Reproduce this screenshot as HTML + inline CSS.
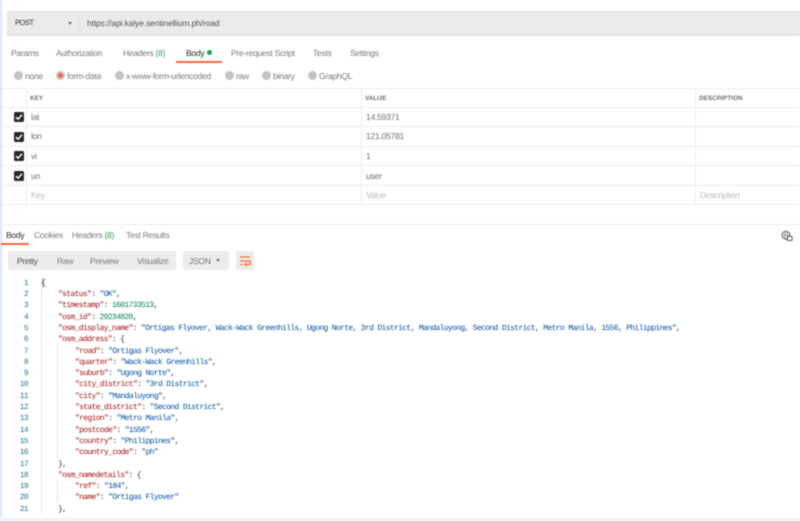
<!DOCTYPE html>
<html><head><meta charset="utf-8"><style>
html,body{margin:0;padding:0;background:#fff}
#r{position:relative;width:800px;height:521px;overflow:hidden;background:#fff;font-family:"Liberation Sans",sans-serif;filter:blur(.45px);text-rendering:geometricPrecision}
#r div,#r span.a{position:absolute;white-space:pre}
.t{font-size:8.6px;letter-spacing:-.3px;color:#7a7a7a;line-height:12px;height:12px}
.d{color:#303030}
.g{color:#2f9e5f}
.r{width:9px;height:9px;border-radius:50%;background:#c4c4c4}
.h{font-size:6.4px;font-weight:bold;color:#707070;line-height:10px}
.lh{background:#ececec}
.v{background:#ececec;width:1px}
.c{width:10px;height:10px;background:#282828;border-radius:1.5px}
.c svg{position:absolute;left:0;top:0}
.cell{font-size:8.6px;letter-spacing:-.3px;color:#707070;line-height:12px}
.ph{color:#b8b8b8}
.m{font-family:"Liberation Mono",monospace;font-size:8px;letter-spacing:-.653px;line-height:11px;color:#333}
.n{font-family:"Liberation Mono",monospace;font-size:8px;letter-spacing:-.653px;line-height:11px;color:#237893;text-align:right;width:20px;left:8px}
.k{color:#a31515}.s{color:#0451a5}.u{color:#098658}
</style></head><body><div id="r">
<div style="left:0;top:0;width:2px;height:521px;background:#d5e6fb"></div>
<div style="left:0;top:518px;width:800px;height:3px;background:#eef3fa"></div>

<div style="left:7px;top:11px;width:793px;height:25px;background:#ebebeb;border-top:1px solid #e0e0e0;border-bottom:1px solid #e0e0e0;box-sizing:border-box"></div>
<div style="left:7px;top:11px;width:1px;height:25px;background:#e0e0e0"></div>
<div style="left:79px;top:11px;width:1px;height:25px;background:#e0e0e0"></div>
<div class="t d" style="left:15px;top:17px;font-size:7.6px;letter-spacing:-.55px">POST</div>
<div style="left:68px;top:22px;width:0;height:0;border-left:2.5px solid transparent;border-right:2.5px solid transparent;border-top:3px solid #707070"></div>
<div class="t" style="left:87px;top:17px;color:#505050;font-size:8.4px;letter-spacing:-.08px">https://api.kalye.sentinellium.ph/road</div>

<div class="t" style="left:11px;top:47px">Params</div>
<div class="t" style="left:56px;top:47px">Authorization</div>
<div class="t" style="left:123px;top:47px">Headers <span class="g">(8)</span></div>
<div class="t d" style="left:186px;top:47px">Body</div>
<div style="left:207px;top:50px;width:5px;height:5px;border-radius:50%;background:#1f9d55"></div>
<div style="left:176px;top:61px;width:46px;height:2px;background:#f26b3a"></div>
<div class="t" style="left:231px;top:47px">Pre-request Script</div>
<div class="t" style="left:313px;top:47px">Tests</div>
<div class="t" style="left:350px;top:47px">Settings</div>

<div class="r" style="left:14px;top:71px"></div><div class="t" style="left:25px;top:70px">none</div>
<div class="r" style="left:56px;top:71px"></div><div style="left:58px;top:73px;width:5px;height:5px;border-radius:50%;background:#f26b3a"></div><div class="t" style="left:67px;top:70px">form-data</div>
<div class="r" style="left:115px;top:71px"></div><div class="t" style="left:126px;top:70px">x-www-form-urlencoded</div>
<div class="r" style="left:225px;top:71px"></div><div class="t" style="left:236px;top:70px">raw</div>
<div class="r" style="left:262px;top:71px"></div><div class="t" style="left:273px;top:70px">binary</div>
<div class="r" style="left:308px;top:71px"></div><div class="t" style="left:319px;top:70px">GraphQL</div>

<div class="lh" style="left:2px;top:88px;width:798px;height:1px"></div>
<div class="lh" style="left:2px;top:107px;width:798px;height:1px"></div>
<div class="lh" style="left:2px;top:126px;width:798px;height:1px"></div>
<div class="lh" style="left:2px;top:146px;width:798px;height:1px"></div>
<div class="lh" style="left:2px;top:165px;width:798px;height:1px"></div>
<div class="lh" style="left:2px;top:185px;width:798px;height:1px"></div>
<div class="lh" style="left:2px;top:204px;width:798px;height:1px"></div>
<div class="lh" style="left:0;top:224px;width:800px;height:1px"></div>
<div class="v" style="left:26px;top:88px;height:117px"></div>
<div class="v" style="left:361px;top:88px;height:117px"></div>
<div class="v" style="left:695px;top:88px;height:117px"></div>

<div class="h" style="left:30px;top:94px">KEY</div>
<div class="h" style="left:365px;top:94px">VALUE</div>
<div class="h" style="left:699px;top:94px">DESCRIPTION</div>

<div class="c" style="left:14px;top:112px"><svg width="10" height="10" viewBox="0 0 10 10"><path d="M2 5.2L4.1 7.2L8 2.8" fill="none" stroke="#fff" stroke-width="1.5"/></svg></div>
<div class="c" style="left:14px;top:132px"><svg width="10" height="10" viewBox="0 0 10 10"><path d="M2 5.2L4.1 7.2L8 2.8" fill="none" stroke="#fff" stroke-width="1.5"/></svg></div>
<div class="c" style="left:14px;top:151px"><svg width="10" height="10" viewBox="0 0 10 10"><path d="M2 5.2L4.1 7.2L8 2.8" fill="none" stroke="#fff" stroke-width="1.5"/></svg></div>
<div class="c" style="left:14px;top:171px"><svg width="10" height="10" viewBox="0 0 10 10"><path d="M2 5.2L4.1 7.2L8 2.8" fill="none" stroke="#fff" stroke-width="1.5"/></svg></div>

<div class="cell" style="left:31px;top:111px">lat</div><div class="cell" style="left:366px;top:111px">14.59371</div>
<div class="cell" style="left:31px;top:130px">lon</div><div class="cell" style="left:366px;top:130px">121.05781</div>
<div class="cell" style="left:31px;top:150px">vi</div><div class="cell" style="left:366px;top:150px">1</div>
<div class="cell" style="left:31px;top:170px">un</div><div class="cell" style="left:366px;top:170px">user</div>
<div class="cell ph" style="left:31px;top:189px">Key</div><div class="cell ph" style="left:366px;top:189px">Value</div><div class="cell ph" style="left:700px;top:189px">Description</div>

<div class="t d" style="left:6px;top:229px">Body</div>
<div style="left:1px;top:243px;width:28px;height:2px;background:#f26b3a"></div>
<div class="t" style="left:34px;top:229px">Cookies</div>
<div class="t" style="left:72px;top:229px">Headers <span class="g">(8)</span></div>
<div class="t" style="left:126px;top:229px">Test Results</div>
<svg style="position:absolute;left:781px;top:230px" width="12" height="12" viewBox="0 0 12 12"><circle cx="5" cy="5.2" r="4" fill="none" stroke="#666" stroke-width="1"/><path d="M1 5.2H9M5 1.2C3 3.5 3 7 5 9.2M5 1.2C7 3.5 7 7 5 9.2" fill="none" stroke="#777" stroke-width=".7"/><rect x="6.5" y="6.5" width="4.5" height="4" fill="#fff" stroke="#555" stroke-width=".9"/></svg>

<div style="left:8px;top:251px;width:168px;height:19px;background:#ececec;border-radius:2px"></div>
<div class="t d" style="left:17px;top:255px;color:#505050">Pretty</div>
<div class="t" style="left:57px;top:255px">Raw</div>
<div class="t" style="left:90px;top:255px">Preview</div>
<div class="t" style="left:137px;top:255px">Visualize</div>
<div style="left:183px;top:251px;width:46px;height:19px;background:#ececec;border-radius:2px"></div>
<div class="t" style="left:189px;top:255px">JSON</div>
<div style="left:216px;top:259px;width:0;height:0;border-left:2.5px solid transparent;border-right:2.5px solid transparent;border-top:3px solid #707070"></div>
<div style="left:236px;top:251px;width:18px;height:19px;background:#ececec;border-radius:2px"></div>
<svg style="position:absolute;left:236px;top:251px" width="18" height="19" viewBox="0 0 18 19"><path d="M4 6H14M4 10H13C15 10 15 13.5 13 13.5H9M4 13.5H6.5" fill="none" stroke="#f26b3a" stroke-width="1.2"/><path d="M10.5 11.7L8.7 13.5L10.5 15.3" fill="none" stroke="#f26b3a" stroke-width="1"/></svg>

<div class="v" style="left:41px;top:277px;height:237px;background:#e4e4e4"></div>
<div class="v" style="left:57px;top:345px;height:113px;background:#e4e4e4"></div>
<div class="v" style="left:57px;top:480px;height:22px;background:#e4e4e4"></div>

<div style="left:41px;top:278px;width:4px;height:10px;background:#e2e2e2"></div>
<div class="n" style="top:278px">1</div><div class="m" style="left:41px;top:278px">{</div>
<div class="n" style="top:289px">2</div><div class="m" style="left:58px;top:289px"><span class="k">"status"</span>: <span class="s">"OK"</span>,</div>
<div class="n" style="top:300px">3</div><div class="m" style="left:58px;top:300px"><span class="k">"timestamp"</span>: <span class="u">1601733513</span>,</div>
<div class="n" style="top:312px">4</div><div class="m" style="left:58px;top:312px"><span class="k">"osm_id"</span>: <span class="u">29234820</span>,</div>
<div class="n" style="top:323px">5</div><div class="m" style="left:58px;top:323px"><span class="k">"osm_display_name"</span>: <span class="s">"Ortigas Flyover, Wack-Wack Greenhills, Ugong Norte, 3rd District, Mandaluyong, Second District, Metro Manila, 1556, Philippines"</span>,</div>
<div class="n" style="top:334px">6</div><div class="m" style="left:58px;top:334px"><span class="k">"osm_address"</span>: {</div>
<div class="n" style="top:346px">7</div><div class="m" style="left:75px;top:346px"><span class="k">"road"</span>: <span class="s">"Ortigas Flyover"</span>,</div>
<div class="n" style="top:357px">8</div><div class="m" style="left:75px;top:357px"><span class="k">"quarter"</span>: <span class="s">"Wack-Wack Greenhills"</span>,</div>
<div class="n" style="top:368px">9</div><div class="m" style="left:75px;top:368px"><span class="k">"suburb"</span>: <span class="s">"Ugong Norte"</span>,</div>
<div class="n" style="top:379px">10</div><div class="m" style="left:75px;top:379px"><span class="k">"city_district"</span>: <span class="s">"3rd District"</span>,</div>
<div class="n" style="top:391px">11</div><div class="m" style="left:75px;top:391px"><span class="k">"city"</span>: <span class="s">"Mandaluyong"</span>,</div>
<div class="n" style="top:402px">12</div><div class="m" style="left:75px;top:402px"><span class="k">"state_district"</span>: <span class="s">"Second District"</span>,</div>
<div class="n" style="top:413px">13</div><div class="m" style="left:75px;top:413px"><span class="k">"region"</span>: <span class="s">"Metro Manila"</span>,</div>
<div class="n" style="top:425px">14</div><div class="m" style="left:75px;top:425px"><span class="k">"postcode"</span>: <span class="s">"1556"</span>,</div>
<div class="n" style="top:436px">15</div><div class="m" style="left:75px;top:436px"><span class="k">"country"</span>: <span class="s">"Philippines"</span>,</div>
<div class="n" style="top:447px">16</div><div class="m" style="left:75px;top:447px"><span class="k">"country_code"</span>: <span class="s">"ph"</span></div>
<div class="n" style="top:459px">17</div><div class="m" style="left:58px;top:459px">},</div>
<div class="n" style="top:470px">18</div><div class="m" style="left:58px;top:470px"><span class="k">"osm_namedetails"</span>: {</div>
<div class="n" style="top:481px">19</div><div class="m" style="left:75px;top:481px"><span class="k">"ref"</span>: <span class="s">"184"</span>,</div>
<div class="n" style="top:492px">20</div><div class="m" style="left:75px;top:492px"><span class="k">"name"</span>: <span class="s">"Ortigas Flyover"</span></div>
<div class="n" style="top:504px">21</div><div class="m" style="left:58px;top:504px">},</div>
</div></body></html>
